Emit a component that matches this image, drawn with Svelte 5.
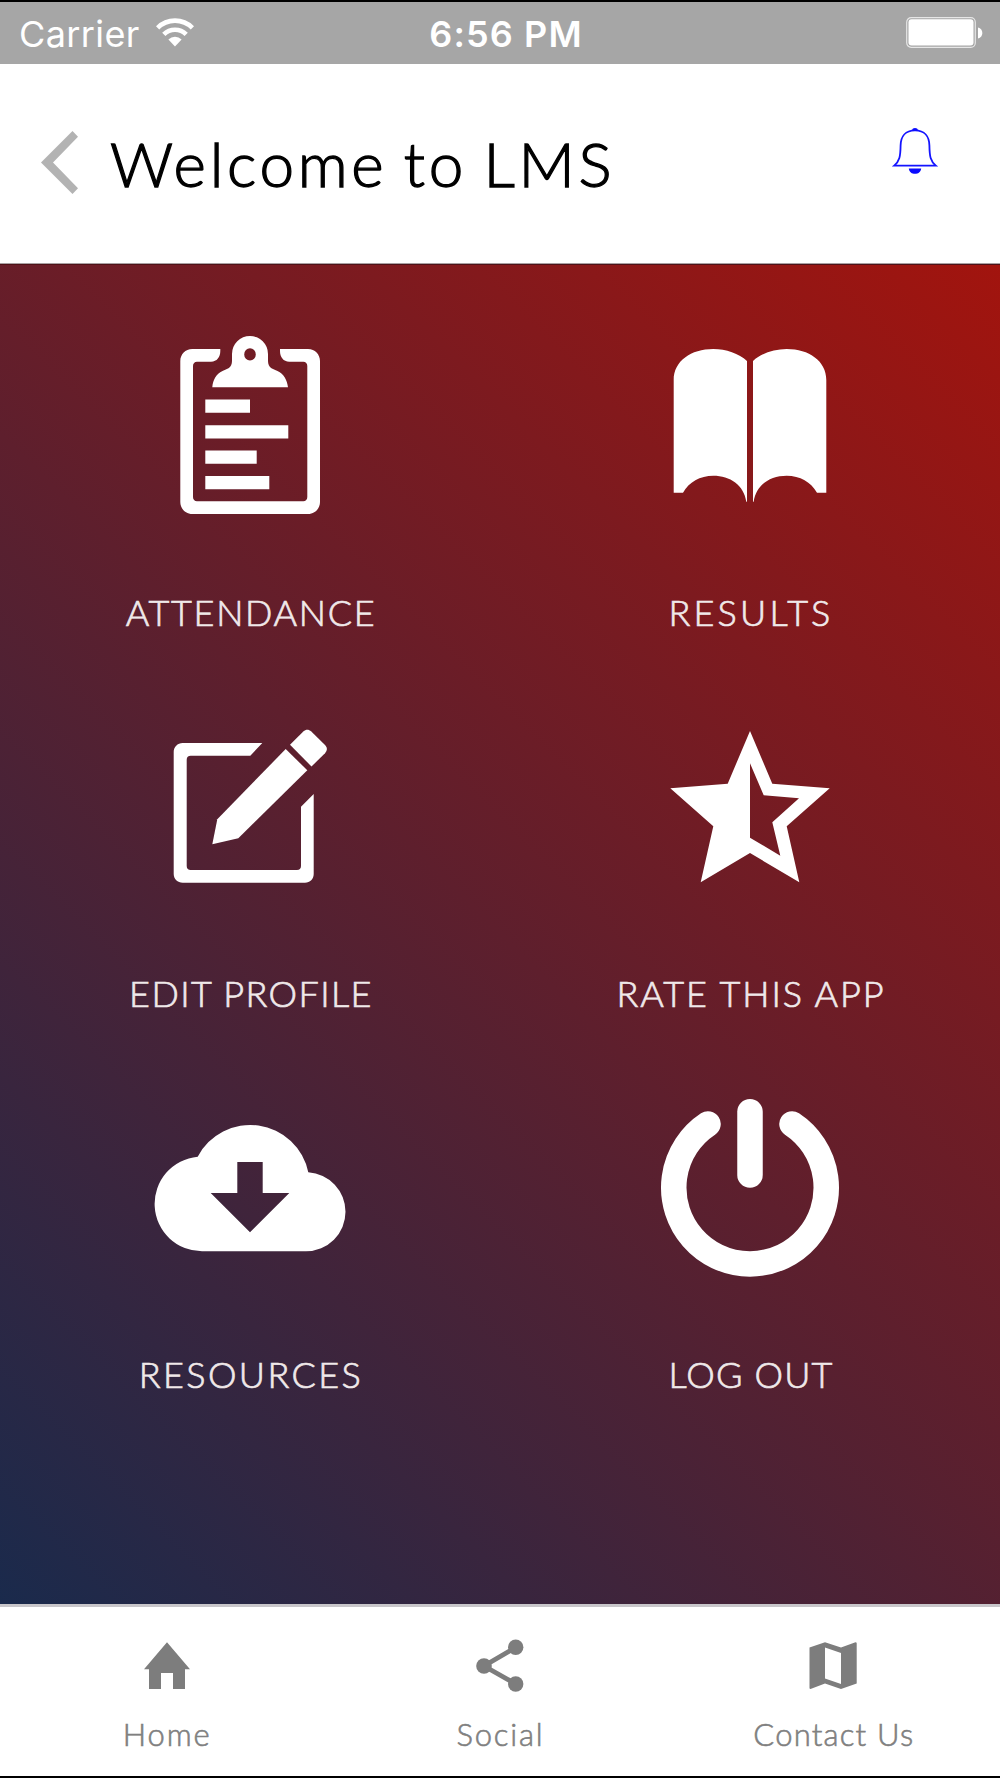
<script>
  const tiles = [
    { name: 'ATTENDANCE', icon: 'clipboard', spacing: 1.7 },
    { name: 'RESULTS', icon: 'book', spacing: 3.2 },
    { name: 'EDIT PROFILE', icon: 'edit', spacing: 1.4 },
    { name: 'RATE THIS APP', icon: 'star', spacing: 1.95 },
    { name: 'RESOURCES', icon: 'cloud', spacing: 2.4 },
    { name: 'LOG OUT', icon: 'power', spacing: 1.15 }
  ];

  const tabs = [
    { name: 'Home', icon: 'home', spacing: 1.9 },
    { name: 'Social', icon: 'share', spacing: 1.8 },
    { name: 'Contact Us', icon: 'map', spacing: 1.2 }
  ];

  let activeTab = $state('');
</script>

<div class="phone">
  <div class="status-bar">
    <div class="carrier">
      <span class="carrier-name">Carrier</span>
      <svg width="38" height="30" viewBox="0 0 38 30">
        <g fill="none" stroke="#fff" stroke-width="4.6">
          <path d="M1.6 9.8A24.6 24.6 0 0 1 36.4 9.8" />
          <path d="M7.8 16.4A15.8 15.8 0 0 1 30.2 16.4" />
        </g>
        <path d="M19 28.5L12.4 21.6A9.3 9.3 0 0 1 25.6 21.6Z" fill="#fff" />
      </svg>
    </div>
    <span class="time">6:56 PM</span>
    <svg class="battery" width="78" height="32" viewBox="0 0 78 32">
      <rect x="0.7" y="0.7" width="68.6" height="29.6" rx="4.5" fill="none" stroke="#e6e6e6" stroke-width="1.2" />
      <rect x="2.5" y="2.3" width="65" height="26.2" rx="3" fill="#fff" />
      <path d="M72 10.5C77.8 11.5 77.8 20.5 72 21.5Z" fill="#fff" />
    </svg>
  </div>

  <header>
    <button class="back" aria-label="Back">
      <svg width="38" height="64" viewBox="0 0 38 64">
        <path d="M31.5 1L37 6.8L12 32.5L37 58.2L31.5 64L0 32.5Z" fill="#b3b3b3" />
      </svg>
    </button>
    <h1>Welcome to LMS</h1>
    <button class="bell" aria-label="Notifications">
      <svg width="48" height="50" viewBox="0 0 48 50">
        <path d="M24 4.3C14.5 4.3 9.7 10.5 9.6 19.5C9.4 30.5 8.6 35 3.2 39.6H44.8C39.4 35 38.6 30.5 38.4 19.5C38.3 10.5 33.5 4.3 24 4.3Z" fill="none" stroke="#1414ff" stroke-width="1.8" />
        <path d="M20.8 4.4A3.3 3.3 0 0 1 27.2 4.4ZM17.8 42.4H30.2C29.6 49.6 18.4 49.6 17.8 42.4Z" fill="#0a0aff" />
      </svg>
    </button>
  </header>

  <main>
    {#each tiles as tile}
      <button class="tile">
        <svg width="200" height="200" viewBox="0 0 200 200" fill="#fff">
          {#if tile.icon === 'clipboard'}
            <path d="M70.3 24V26C70.3 32 67 36.7 61 36.7H47C44.5 36.7 43 38.5 43 41V172C43 174.5 44.5 176.3 47 176.3H153.3C155.8 176.3 157.3 174.5 157.3 172V41C157.3 38.5 155.8 36.7 153.3 36.7H139.3C133.3 36.7 130 32 130 26V24H158C165 24 170 29.5 170 36V177C170 183.5 165 189 158 189H42.3C35.3 189 30.3 183.5 30.3 177V36C30.3 29.5 35.3 24 42.3 24Z" />
            <path fill-rule="evenodd" d="M62.3 62.3C63 55 66 49 72.5 46C77 44 82 43 82 36V29A18 18 0 0 1 118 29V36C118 43 123 44 127.5 46C134 49 137 55 138 62.3ZM100 23.2A5.8 6.2 0 0 0 100 35.6A5.8 6.2 0 0 0 100 23.2Z" />
            <path d="M55.3 74.6H100V87.8H55.3ZM55.3 100.2H138.3V113.4H55.3ZM55.3 125.5H106.7V138.7H55.3ZM55.3 151H119.3V164.2H55.3Z" />
          {:else if tile.icon === 'book'}
            <path d="M23.7 55C23.7 36 41 24 63.3 24C76 24 89 28.5 97 36V176.7H96.3C94 160 80 150.7 63.3 150.7C50 150.7 39 157 33 167.7H23.7Z" />
            <path d="M176.3 55C176.3 36 159 24 136.7 24C124 24 111 28.5 103 36V176.7H103.7C106 160 120 150.7 136.7 150.7C150 150.7 161 157 167 167.7H176.3Z" />
          {:else if tile.icon === 'edit'}
            <path d="M112.3 37L100.3 49.7H40.7C38.2 49.7 36.7 51.2 36.7 53.7V160C36.7 162.5 38.2 164 40.7 164H147C149.5 164 151 162.5 151 160V100.7L163.7 88V168C163.7 173 160 176.7 155 176.7H32.7C27.5 176.7 23.7 173 23.7 168V46C23.7 41 27.5 37 32.7 37Z" />
            <path d="M135.7 43L157.3 64.3L88.3 132.3L62.3 138.3L67.3 113.3Z" />
            <path d="M140 38.7L153.3 25.5C156 23 158.5 23 161.3 25.5L175 39C177.5 41.7 177.5 44.5 175 47.2L161.5 60.5Z" />
          {:else if tile.icon === 'star'}
            <path fill-rule="evenodd" d="M100 25L122.3 77.7L179.7 82.3L136.7 120.3L149.3 176.3L100 147L50.7 176.3L63.3 120.3L20.3 82.3L77.7 77.7ZM100 57.3V131.7L130.3 149.7L122.3 116.3L149 92.3L113.7 89.3Z" />
          {:else if tile.icon === 'cloud'}
            <path fill-rule="evenodd" d="M52.5 164.3A47.4 47.4 0 0 1 47.7 69.7A59.3 59.3 0 0 1 158.3 85.3A39.5 39.5 0 0 1 195.5 124.8A39.5 39.5 0 0 1 156 164.3ZM87.3 75V106H60.7L100 145.3L139.3 106H112.7V75Z" />
          {:else}
            <g fill="none" stroke="#fff" stroke-width="25.5" stroke-linecap="round">
              <path d="M100 24.7V88" />
              <path d="M58 37A76.25 76.25 0 1 0 142 37" />
            </g>
          {/if}
        </svg>
        <span style="letter-spacing: {tile.spacing}px">{tile.name}</span>
      </button>
    {/each}
  </main>

  <nav>
    {#each tabs as tab}
      <button class="tab" class:active={activeTab === tab.name} onclick={() => (activeTab = tab.name)}>
        <svg width="60" height="60" viewBox="0 0 60 60" fill="#7d7d7d">
          {#if tab.icon === 'home'}
            <path d="M30 6.3L53 33.3H48V53H36V37H24V53H12V33.3H7Z" />
          {:else if tab.icon === 'share'}
            <path d="M45.7 11.3L14 30L45.7 48" fill="none" stroke="#7d7d7d" stroke-width="4.8" />
            <circle cx="45.7" cy="11.3" r="7.7" />
            <circle cx="14" cy="30" r="7.8" />
            <circle cx="45.7" cy="48" r="7.7" />
          {:else}
            <path fill-rule="evenodd" d="M6.5 11.5L22 6.3L38 11.5L52.5 6.3Q53.7 6.3 53.7 7.3V47.5L38 53L22 47.5L7.5 53Q6.5 53 6.5 52ZM22 11.5V42.5L38 48V17Z" />
          {/if}
        </svg>
        <span style="letter-spacing: {tab.spacing}px">{tab.name}</span>
      </button>
    {/each}
  </nav>
</div>

<style>
  :global(body) {
    margin: 0;
    background: #000;
  }

  .phone {
    box-sizing: border-box;
    width: 1000px;
    height: 1778px;
    display: flex;
    flex-direction: column;
    border-top: 2px solid #000;
    border-bottom: 2px solid #000;
    font-family: Lato, "Open Sans", sans-serif;
    overflow: hidden;
  }

  svg {
    display: block;
    flex: none;
  }

  button {
    border: none;
    background: none;
    padding: 0;
    margin: 0;
    font: inherit;
    cursor: pointer;
  }

  .status-bar {
    flex: none;
    box-sizing: border-box;
    height: 62px;
    padding: 0 16px 0 19px;
    display: grid;
    grid-template-columns: 1fr auto 1fr;
    align-items: center;
    background: #a6a6a6;
    color: #fff;
    font-family: Inter, Roboto, sans-serif;
    font-size: 36px;
  }

  .carrier {
    display: flex;
    align-items: center;
    gap: 16px;
  }

  .carrier-name {
    padding-top: 2px;
    letter-spacing: 0.4px;
  }

  .time {
    font-weight: 600;
    padding: 2px 0 0 9px;
    letter-spacing: 1.1px;
  }

  .battery {
    justify-self: end;
  }

  header {
    flex: none;
    box-sizing: border-box;
    height: 200px;
    padding: 0 61px 0 41px;
    display: flex;
    align-items: flex-start;
    background: #fff;
    border-bottom: 1px solid #a9a0a2;
  }

  .back {
    margin-top: 66px;
  }

  h1 {
    margin: 62px 0 0 31px;
    font-size: 62px;
    line-height: 74px;
    font-weight: 300;
    color: #000;
    white-space: nowrap;
    letter-spacing: 3.7px;
    word-spacing: -4px;
    -webkit-text-stroke: 1.3px #000;
  }

  .bell {
    margin: 62px 0 0 auto;
  }

  main {
    flex: none;
    box-sizing: border-box;
    height: 1340px;
    padding-top: 60px;
    display: grid;
    grid-template-columns: 1fr 1fr;
    grid-auto-rows: 381px;
    background: linear-gradient(45deg, #1a2a4c, #a2140e);
    border-top: 1px solid #4f1218;
  }

  .tile {
    display: flex;
    flex-direction: column;
    align-items: center;
    justify-content: flex-start;
    color: #f0e9ea;
  }

  .tile span {
    margin: 66px 0 0 2px;
    font-size: 36px;
    font-weight: 300;
    line-height: 43px;
    white-space: nowrap;
    -webkit-text-stroke: 0.7px;
  }

  nav {
    flex: 1;
    display: grid;
    grid-template-columns: repeat(3, 1fr);
    background: #fff;
    border-top: 3px solid #c8c6ca;
  }

  .tab {
    display: flex;
    flex-direction: column;
    align-items: center;
    padding-top: 29px;
    color: #808080;
  }

  .tab span {
    margin: 19px 0 0 1px;
    font-size: 31px;
    font-weight: 300;
    line-height: 38px;
    white-space: nowrap;
    -webkit-text-stroke: 0.6px;
  }

  .tab.active {
    color: #555;
  }
</style>
